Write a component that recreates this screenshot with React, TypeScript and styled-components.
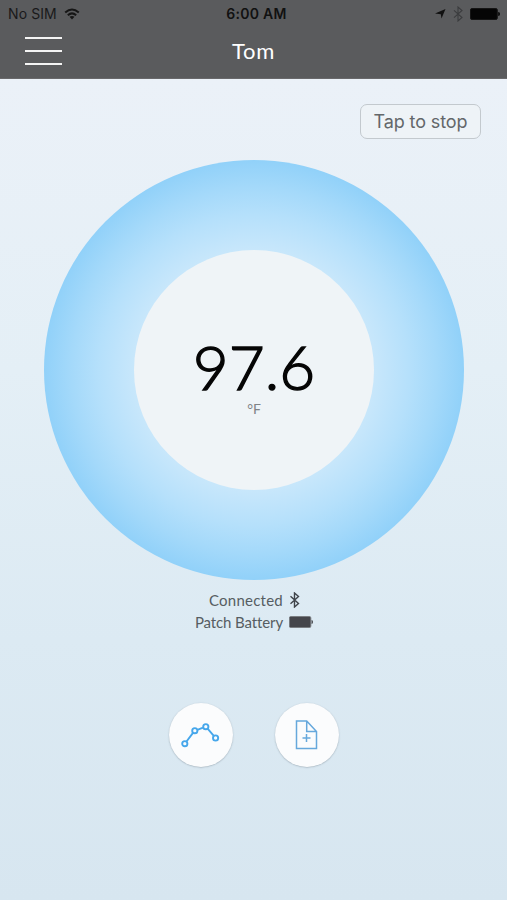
import React from 'react';
import styled, { createGlobalStyle } from 'styled-components';

const GlobalStyle = createGlobalStyle`
  * { box-sizing: border-box; }
  body { margin: 0; font-family: Lato, "Open Sans", sans-serif; }
  svg { display: block; flex: none; }
`;

const Screen = styled.main`
  display: flex;
  flex-direction: column;
  width: 507px;
  height: 900px;
  overflow: hidden;
  background: linear-gradient(180deg, #ebf1f8 79px, #e4eff6 370px, #dceaf3 640px, #d7e6f0 900px);
`;

const Header = styled.header`
  height: 79px;
  flex: none;
  background: #5a5b5d;
  border-bottom: 1px solid #69696b;
`;

const StatusBar = styled.div`
  display: grid;
  grid-template-columns: 1fr auto 1fr;
  align-items: center;
  height: 27px;
  padding: 0 7px 0 8px;
  font-family: Inter, "Liberation Sans", sans-serif;
  font-size: 14px;
  line-height: 27px;
  color: #19191a;
`;

const Carrier = styled.div`
  display: flex;
  align-items: center;
  gap: 7px;
  letter-spacing: 0.1px;
`;

const Clock = styled.div`
  font-weight: 600;
  font-size: 14px;
  letter-spacing: 0.25px;
  color: #111;
  padding-left: 5px;
`;

const Indicators = styled.div`
  display: flex;
  justify-content: flex-end;
  align-items: center;
  gap: 7px;
`;

const NavBar = styled.nav`
  display: grid;
  grid-template-columns: 1fr auto 1fr;
  align-items: center;
  height: 48px;
  padding: 0 25px;
`;

const MenuButton = styled.button`
  display: flex;
  flex-direction: column;
  gap: 11px;
  width: 37px;
  padding: 0;
  border: 0;
  background: none;
`;

const MenuLine = styled.span`
  height: 2.2px;
  background: #f4f4f4;
`;

const Title = styled.h1`
  margin: 0;
  font-size: 22px;
  line-height: 28px;
  font-weight: 400;
  letter-spacing: 0.7px;
  color: #fff;
`;

const Actions = styled.div`
  display: flex;
  justify-content: flex-end;
  padding: 25px 26px 0 0;
`;

const StopButton = styled.button`
  width: 121px;
  height: 35px;
  padding: 0;
  border: 1.5px solid #c3c9ce;
  border-radius: 7px;
  background: #eef3f7;
  color: #63676a;
  font: 400 18px/31px Inter, sans-serif;
  letter-spacing: -0.1px;
  white-space: nowrap;
`;

const Ring = styled.section`
  display: grid;
  place-items: center;
  flex: none;
  width: 420px;
  height: 420px;
  margin: 21px 0 0 44px;
  border-radius: 50%;
  background: radial-gradient(circle closest-side, #c8e7fb 57%, #b5e0fb 74%, #a4d9fa 87%, #91d1f9 100%);
`;

const Dial = styled.div`
  display: flex;
  flex-direction: column;
  align-items: center;
  width: 240px;
  height: 240px;
  padding-top: 80px;
  border-radius: 50%;
  background: #eff4f7;
`;

const Reading = styled.div`
  height: 70px;
  font-size: 62px;
  line-height: 72px;
  font-weight: 300;
  color: #050505;
  -webkit-text-stroke: 1.4px #050505;
`;

const Unit = styled.div`
  font-size: 14px;
  line-height: 18px;
  color: #808386;
`;

const Status = styled.section`
  display: flex;
  flex-direction: column;
  padding: 9px 0 0 195px;
`;

const StatusRow = styled.div`
  display: flex;
  align-items: center;
  width: 118px;
  height: 22px;
  gap: 6px;
  color: #565d62;
`;

const StatusLabel = styled.span<{ $tracking: number }>`
  width: 88px;
  display: flex;
  justify-content: flex-end;
  font-size: 15px;
  line-height: 20px;
  padding-bottom: 1px;
  letter-spacing: ${({ $tracking }) => $tracking}px;
  white-space: nowrap;
`;

const Tools = styled.div`
  display: flex;
  gap: 41.5px;
  margin: 70px 0 0 169px;
`;

const RoundButton = styled.button`
  display: grid;
  place-items: center;
  width: 64px;
  height: 64px;
  padding: 0 0 1px;
  border: 0;
  border-radius: 50%;
  background: #fbfcfd;
  box-shadow: 0 0.5px 1.5px rgba(70, 85, 100, 0.42);
`;

const WifiIcon = () => (
  <svg width="16" height="12" viewBox="0 0 16 12" fill="none" stroke="#161616" strokeWidth="2">
    <path d="M1.2 4.5Q8-1.5 14.8 4.5M3.8 7.2Q8 3.6 12.2 7.2" />
    <path d="M5.5 8.8Q8 7 10.5 8.8L8 11.5Z" fill="#161616" stroke="none" />
  </svg>
);

const LocationIcon = () => (
  <svg width="11" height="11" viewBox="0 0 11 11" fill="#111">
    <path d="M10.5 1 6.5 10.5 5.8 6.2 0 5.6Z" />
  </svg>
);

const BluetoothIcon = ({ color, width, height, stroke }: { color: string; width: number; height: number; stroke: number }) => (
  <svg width={width} height={height} viewBox="0 0 10 16" fill="none" stroke={color} strokeWidth={stroke}>
    <path d="M1 4.3 9 11.5 5 15V1L9 4.5 1 11.7" />
  </svg>
);

const BatteryIcon = ({ color, edge, width, height }: { color: string; edge: string; width: number; height: number }) => (
  <svg width={width} height={height} viewBox="0 0 30 12" preserveAspectRatio="none">
    <rect x=".5" y=".5" width="26.8" height="11" rx="1.5" fill={color} stroke={edge} />
    <path d="M28.2 4Q30 4 30 6T28.2 8Z" fill={color} />
  </svg>
);

const TrendIcon = () => (
  <svg width="40" height="28" viewBox="0 0 40 28" fill="none" stroke="#46a7eb" strokeWidth="1.9">
    <path d="M5.5 20.5 12.2 11.7M16.4 8.8 22 6.7M26.6 7.7 32.8 14.8" />
    <circle cx="3.8" cy="22.7" r="2.6" />
    <circle cx="13.8" cy="9.7" r="2.6" />
    <circle cx="24.8" cy="5.7" r="2.6" />
    <circle cx="34.6" cy="17" r="2.6" />
  </svg>
);

const AddDocumentIcon = () => (
  <svg width="23" height="30" viewBox="0 0 23 30" fill="none" stroke="#66a8dc" strokeWidth="1.5">
    <path d="M1.5 1h10.2L21.5 11.5v17h-20zM11.7 1v10.5h9.8M7.5 18h8M11.5 14v8" />
  </svg>
);

export default function App() {
  return (
    <>
      <GlobalStyle />
      <Screen>
        <Header>
          <StatusBar>
            <Carrier>No SIM <WifiIcon /></Carrier>
            <Clock>6:00 AM</Clock>
            <Indicators>
              <LocationIcon />
              <BluetoothIcon color="#3b3c3e" width={10} height={16} stroke={1.1} />
              <BatteryIcon color="#050505" edge="#151515" width={30} height={12} />
            </Indicators>
          </StatusBar>
          <NavBar>
            <MenuButton aria-label="Menu"><MenuLine /><MenuLine /><MenuLine /></MenuButton>
            <Title>Tom</Title>
          </NavBar>
        </Header>
        <Actions><StopButton>Tap to stop</StopButton></Actions>
        <Ring>
          <Dial>
            <Reading>97.6</Reading>
            <Unit>°F</Unit>
          </Dial>
        </Ring>
        <Status>
          <StatusRow>
            <StatusLabel $tracking={0.25}>Connected</StatusLabel>
            <BluetoothIcon color="#3f444a" width={11} height={16} stroke={1.4} />
          </StatusRow>
          <StatusRow>
            <StatusLabel $tracking={-0.12}>Patch Battery</StatusLabel>
            <BatteryIcon color="#45464b" edge="#777a7f" width={24} height={12} />
          </StatusRow>
        </Status>
        <Tools>
          <RoundButton aria-label="Trend"><TrendIcon /></RoundButton>
          <RoundButton aria-label="Add note"><AddDocumentIcon /></RoundButton>
        </Tools>
      </Screen>
    </>
  );
}
